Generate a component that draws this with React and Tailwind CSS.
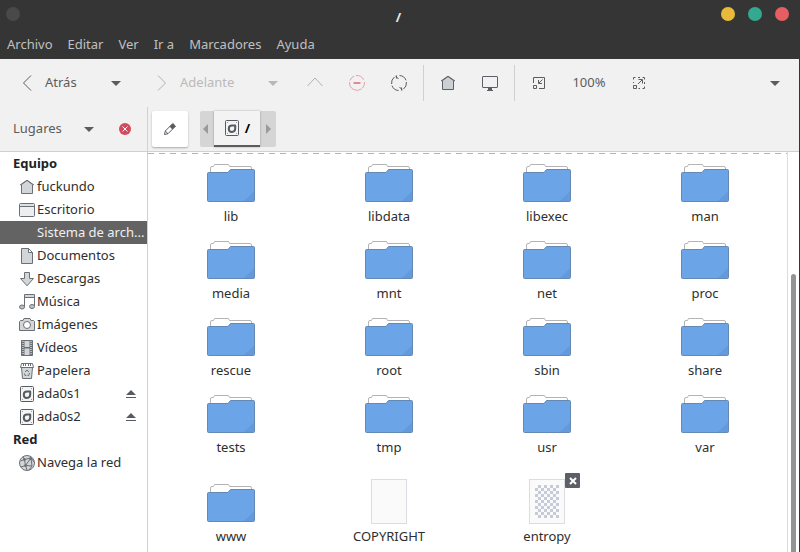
import React, { useState } from "react";

const DiskIcon = ({ className = "w-4 h-4" }) => (
  <svg viewBox="0 0 16 16" className={className} fill="none" stroke="#565b62">
    <rect x="1.500" y="0.500" width="13" height="15" rx="1" fill="#f4f4f5" />
    <path d="M3 2.500h1M12 2.500h1M3 13.500h1M12 13.500h1" stroke="#9a9ea3" />
    <path
      d="M8 5.500H11.200V8.800A3.200 3.200 0 1 1 8 5.500z"
      strokeWidth="2"
      strokeLinejoin="round"
    />
  </svg>
);

const placeIcons = {
  home: (
    <>
      <path d="M2.500 5.500v9h11v-9L8 1.500z" fill="#d3d6d8" />
      <path d="M1 6l7-4.800L15 6" />
    </>
  ),
  desktop: (
    <>
      <rect x="0.500" y="1.500" width="15" height="13" rx="1" fill="#eceeef" />
      <path d="M1 4.500h14" />
      <path d="M1.500 3h13" stroke="#cfd2d4" />
    </>
  ),
  document: (
    <>
      <path d="M2.500.5h7l4 4v11h-11z" fill="#d3d6d8" />
      <path d="M9.500.5v4h4z" fill="#fff" />
    </>
  ),
  download: <path d="M5.500 1.500h5v6h4L8 14.800 1.500 7.500h4z" fill="#d3d6d8" />,
  music: (
    <>
      <path d="M5.500 13V.5h10V12M5.500 3.500h10" />
      <path d="M6 1h9v2H6z" fill="#d3d6d8" stroke="none" />
      <ellipse cx="3" cy="13" rx="2.500" ry="2" fill="#bfc3c6" />
      <ellipse cx="13" cy="12.500" rx="2.500" ry="2" fill="#bfc3c6" />
    </>
  ),
  camera: (
    <>
      <path d="M1.500 3.500H4l1-2h6l1 2h2.500l1 1v9H.500v-9z" fill="#d3d6d8" />
      <circle cx="8" cy="8" r="3.500" fill="#fff" />
    </>
  ),
  video: (
    <>
      <path d="M2.500.5h11v15h-11z" fill="#6b7076" />
      <path d="M5.500 1h5v6h-5zM5.500 8.500h5v6.500h-5z" fill="#d3d6d8" stroke="none" />
      <path d="M4 1v14M12 1v14" stroke="#fff" strokeDasharray="1 1" />
    </>
  ),
  trash: (
    <>
      <path d="M2.500 4.500h11l-1 11h-9z" fill="#d3d6d8" />
      <path d="M1.500 4.500l1-4h11l1 4z" fill="#fff" />
      <path d="M4.500 1v2M6.500 1v2M9.500 1v2M11.500 1v2" />
      <path d="M6.200 9L8 7l1.800 2M10.500 10l-.8 2.500H8.500M7.300 12.500H6l-.6-2" />
    </>
  ),
  network: (
    <>
      <circle cx="8" cy="8" r="7.500" fill="#d3d6d8" />
      <path d="M1.500 6l4-1.500L12 3M5.500 4.500L4 1.800M5.500 4.500l1 6L2 12M6.500 10.500L12 3l1 8-6.500-.5M6.500 10.500L8 15M13 11l-3 4M12 3l3 4" />
      <circle cx="5.500" cy="4.500" r="1" fill="#6b7076" />
      <circle cx="11.500" cy="3.500" r="1" fill="#6b7076" />
      <circle cx="6.500" cy="10.500" r="1" fill="#6b7076" />
    </>
  ),
};

const PlaceIcon = ({ name }) => {
  if (name === "disk") return <DiskIcon className="w-4 h-4 shrink-0" />;
  return (
    <svg viewBox="0 0 16 16" className="w-4 h-4 shrink-0" fill="none" stroke="#6b7076">
      {placeIcons[name]}
    </svg>
  );
};

const FolderIcon = () => (
  <svg viewBox="0 0 48 39" className="w-[48px] h-[39px]">
    <path d="M3.500 12V5q0-1.500 1.500-1.500h1.500l1-2h14l1 2h20.500q1.500 0 1.500 1.500v6z" fill="#fff" stroke="#b4b4b4" />
    <path d="M.5 10.500q0-1 1-1H21l2.500-3h23q1 0 1 1V37.500q0 1-1 1h-45q-1 0-1-1z" fill="#6ba4e7" stroke="#6589b5" />
    <path d="M47 28.500v9q0 .5-.5.500H37z" fill="#6499dc" />
  </svg>
);

const FileIcon = () => (
  <svg viewBox="0 0 36 45" className="w-[36px] h-[45px]">
    <rect x="0.500" y="0.500" width="35" height="44" fill="#fafafa" stroke="#dcdce2" />
  </svg>
);

const BinaryIcon = () => (
  <svg viewBox="0 0 36 45" className="w-[36px] h-[45px]">
    <defs>
      <pattern id="checks" x="6" y="6" width="6" height="6" patternUnits="userSpaceOnUse">
        <path d="M3 0h3v3H3zM0 3h3v3H0z" fill="#c6cbdc" />
      </pattern>
    </defs>
    <rect x="0.500" y="0.500" width="35" height="44" fill="#fafafa" stroke="#dcdce2" />
    <rect x="6" y="6" width="24" height="33" fill="url(#checks)" />
  </svg>
);

const Caret = ({ className = "fill-[#5c5c5c]" }) => (
  <svg viewBox="0 0 10 5" className={`w-[10px] h-[5px] ${className}`}>
    <path d="M0 0h10L5 5z" />
  </svg>
);

const Eject = () => (
  <svg viewBox="0 0 10 8" className="w-[10px] h-[8px] fill-[#565b62]">
    <path d="M5 0l5 5H0zM0 7h10v1H0z" />
  </svg>
);

const menus = ["Archivo", "Editar", "Ver", "Ir a", "Marcadores", "Ayuda"];

const places = [
  {
    title: "Equipo",
    items: [
      { label: "fuckundo", icon: "home" },
      { label: "Escritorio", icon: "desktop" },
      { label: "Sistema de arch...", icon: "root" },
      { label: "Documentos", icon: "document" },
      { label: "Descargas", icon: "download" },
      { label: "Música", icon: "music" },
      { label: "Imágenes", icon: "camera" },
      { label: "Vídeos", icon: "video" },
      { label: "Papelera", icon: "trash" },
      { label: "ada0s1", icon: "disk", eject: true },
      { label: "ada0s2", icon: "disk", eject: true },
    ],
  },
  {
    title: "Red",
    items: [{ label: "Navega la red", icon: "network" }],
  },
];

const files = [
  "lib", "libdata", "libexec", "man",
  "media", "mnt", "net", "proc",
  "rescue", "root", "sbin", "share",
  "tests", "tmp", "usr", "var",
  "www",
].map((name) => ({ name, type: "folder" }));

files.push({ name: "COPYRIGHT", type: "file" });
files.push({ name: "entropy", type: "binary", locked: true });

const ToolButton = ({ label, className = "w-[42px]", children, ...rest }) => (
  <button
    aria-label={label}
    className={`h-[36px] flex items-center justify-center ${className}`}
    {...rest}
  >
    {children}
  </button>
);

const Separator = () => <div className="w-px h-[36px] mx-[3px] bg-[#d0d0d0]" />;

function TitleBar() {
  return (
    <header className="bg-[#353535] text-[#c0c0c0]">
      <div className="h-[28px] pl-[6px] pr-[11px] flex items-center justify-between">
        <button aria-label="Menú" className="w-[14px] h-[14px] rounded-full bg-[#494949]" />
        <h1 className="pl-[56px] pt-[6px] font-bold text-[#e8e8e8]">/</h1>
        <div className="flex gap-[13px]">
          <button aria-label="Minimizar" className="w-[14px] h-[14px] rounded-full bg-[#e9ba3a]" />
          <button aria-label="Maximizar" className="w-[14px] h-[14px] rounded-full bg-[#33a98f]" />
          <button aria-label="Cerrar" className="w-[14px] h-[14px] rounded-full bg-[#e55e64]" />
        </div>
      </div>
      <nav className="h-[31px] px-[7px] flex items-center gap-[15px]">
        {menus.map((m) => (
          <button key={m}>{m}</button>
        ))}
      </nav>
    </header>
  );
}

function Toolbar() {
  return (
    <div className="h-[48px] flex items-center text-[#5c5c5c]">
      <ToolButton className="w-[100px] pl-[22px] gap-[13px] justify-start!">
        <svg viewBox="0 0 10 16" className="w-[10px] h-[16px]" fill="none" stroke="#5c5c5c">
          <path d="M9 .5L1.500 8 9 15.500" />
        </svg>
        <span className="pb-[2px]">Atrás</span>
      </ToolButton>
      <ToolButton label="Historial atrás" className="w-[32px]">
        <Caret />
      </ToolButton>
      <ToolButton className="w-[125px] pl-[25px] gap-[13px] justify-start! text-[#bababa]" disabled>
        <svg viewBox="0 0 10 16" className="w-[10px] h-[16px]" fill="none" stroke="#b0b0b0">
          <path d="M1 .5L8.500 8 1 15.500" />
        </svg>
        <span className="pb-[2px]">Adelante</span>
      </ToolButton>
      <ToolButton label="Historial adelante" className="w-[32px] mr-[5px]" disabled>
        <Caret className="fill-[#b8b8b8]" />
      </ToolButton>
      <ToolButton label="Subir" disabled>
        <svg viewBox="0 0 16 16" className="w-4 h-4" fill="none" stroke="#b0b0b0">
          <path d="M.5 11L8 3l7.500 8" />
        </svg>
      </ToolButton>
      <ToolButton label="Detener" disabled>
        <svg viewBox="0 0 16 16" className="w-4 h-4" fill="none" stroke="#e3a0a8">
          <path d="M1 5.500a7.500 7.500 0 0 1 4-4.300M6.800.6a7.500 7.500 0 0 1 7.800 4.200M15.400 7a7.500 7.500 0 0 1-2 6.200M12.500 13.900A7.500 7.500 0 0 1 .6 7" />
          <path d="M4.500 8h7" stroke="#dd8c96" strokeWidth="2" />
        </svg>
      </ToolButton>
      <ToolButton label="Recargar">
        <svg viewBox="0 0 16 16" className="w-4 h-4" fill="none" stroke="#5c5c5c">
          <path d="M8.500.5A7.500 7.500 0 0 1 15 5.300M15.400 7A7.500 7.500 0 0 1 12.500 14M7.500 15.500A7.500 7.500 0 0 1 1 10.700M.6 9A7.500 7.500 0 0 1 3.500 2M4.500.8l3 3.200M5.500.5v3M11.500 15.200L8.500 12M10.500 15.500v-3" />
        </svg>
      </ToolButton>
      <Separator />
      <ToolButton label="Carpeta personal">
        <svg viewBox="0 0 16 16" className="w-4 h-4" stroke="#5c6066">
          <path d="M2.500 5.500v9h11v-9L8 1.500z" fill="#cdd0d2" />
          <path d="M1 6l7-4.800L15 6" fill="none" />
        </svg>
      </ToolButton>
      <ToolButton label="Equipo">
        <svg viewBox="0 0 16 16" className="w-4 h-4" fill="none" stroke="#5c6066">
          <rect x="0.500" y="1.500" width="15" height="11" rx="0.500" />
          <path d="M6 13h4v2h1v1H5v-1h1z" fill="#5c6066" stroke="none" />
        </svg>
      </ToolButton>
      <Separator />
      <ToolButton label="Reducir">
        <svg viewBox="0 0 12 12" className="w-[12px] h-[12px]" fill="none" stroke="#5c5c5c">
          <path d="M.5 6V.5h11v11H6M.5 8.500h3v3h-3z" />
          <path d="M9.500 2.500L6 6M5.500 3v3.500H9" />
        </svg>
      </ToolButton>
      <ToolButton className="w-[58px]">
        <span className="pb-[2px]">100%</span>
      </ToolButton>
      <ToolButton label="Ampliar">
        <svg viewBox="0 0 12 12" className="w-[12px] h-[12px]" fill="none" stroke="#5c5c5c">
          <path d="M.5 6V5M.5 2.500v-2h2M5 .5h2M9.500.5h2v2M11.500 5v2M11.500 9.500v2h-2M7 11.500H5.500M.5 8.500h3v3h-3z" />
          <path d="M5 7l4-4M5.500 2.500h4v4" />
        </svg>
      </ToolButton>
      <ToolButton label="Más opciones" className="w-[42px] ml-auto mr-[3px]">
        <Caret />
      </ToolButton>
    </div>
  );
}

function PathBar() {
  return (
    <div className="h-full flex items-center px-[4px]">
      <button
        aria-label="Editar ubicación"
        className="w-[36px] h-[36px] rounded-[2px] bg-white shadow-[0_1px_2px_rgba(0,0,0,0.3)] flex items-center justify-center"
      >
        <svg viewBox="0 0 14 14" className="w-[14px] h-[14px]" stroke="#565b62" fill="none">
          <path d="M1.500 12.500l.8-3.500L7 4.300l2.700 2.700L5 11.700z" fill="#fff" />
          <path d="M7 4.300L9.800 1.500l2.700 2.700L9.700 7z" fill="#565b62" />
          <path d="M2.300 9L5 11.700" />
        </svg>
      </button>
      <div className="ml-[12px] h-[36px] flex items-stretch rounded-[2px] bg-[#d5d5d5]">
        <button aria-label="Anterior" className="w-[14px] pr-[3px] flex items-center justify-center">
          <svg viewBox="0 0 5 10" className="w-[5px] h-[10px] fill-[#9a9a9a]">
            <path d="M5 0v10L0 5z" />
          </svg>
        </button>
        <button className="w-[46px] flex items-center justify-center gap-[5px] bg-[#f3f3f3] border-b-2 border-[#5c5c5c] font-bold text-black shadow-[0_0_2px_rgba(0,0,0,0.3)]">
          <DiskIcon />/
        </button>
        <button aria-label="Siguiente" className="w-[16px] flex items-center justify-center">
          <svg viewBox="0 0 5 10" className="w-[5px] h-[10px] fill-[#9a9a9a]">
            <path d="M0 0v10l5-5z" />
          </svg>
        </button>
      </div>
    </div>
  );
}

function Sidebar({ selected, onSelect }) {
  return (
    <aside className="w-[148px] shrink-0 border-r border-[#d0d0d0] leading-[23px] overflow-hidden">
      {places.map((group) => (
        <section key={group.title}>
          <h2 className="h-[23px] pl-[13px] font-bold text-[#222]">{group.title}</h2>
          <ul>
            {group.items.map((item) => (
              <li
                key={item.label}
                className={`h-[23px] pl-[19px] pr-[11px] flex items-center ${
                  selected === item.label ? "bg-[#636363] text-[#f0f0f0]" : ""
                }`}
              >
                <button
                  onClick={() => onSelect(item.label)}
                  className="flex-1 flex items-center gap-[2px] whitespace-nowrap"
                >
                  <PlaceIcon name={item.icon} />
                  {item.label}
                </button>
                {item.eject && (
                  <button aria-label={`Expulsar ${item.label}`}>
                    <Eject />
                  </button>
                )}
              </li>
            ))}
          </ul>
        </section>
      ))}
    </aside>
  );
}

function FileItem({ file }) {
  if (file.type === "folder") {
    return (
      <button className="flex flex-col items-center gap-[5px]">
        <FolderIcon />
        <span>{file.name}</span>
      </button>
    );
  }

  return (
    <button className="pt-[8px] flex flex-col items-center gap-[3px]">
      <span className="relative">
        {file.type === "binary" ? <BinaryIcon /> : <FileIcon />}
        {file.locked && (
          <span className="absolute -top-[6px] left-full w-[15px] h-[15px] rounded-[1px] bg-[#5c5f66] flex items-center justify-center">
            <svg viewBox="0 0 8 8" className="w-[8px] h-[8px]" stroke="#fff" strokeWidth="2">
              <path d="M1 1l6 6M7 1L1 7" />
            </svg>
          </span>
        )}
      </span>
      <span>{file.name}</span>
    </button>
  );
}

export default function App() {
  const [selected, setSelected] = useState("Sistema de arch...");

  return (
    <div className="h-screen flex flex-col bg-white text-[13px] leading-[18px] text-[#2e2e2e] font-['Noto_Sans',sans-serif] overflow-hidden">
      <TitleBar />

      <div className="flex-1 min-h-0 flex flex-col border-r border-[#353535]">
        <div className="bg-[#f1f1f1] border-b border-[#d0d0d0]">
          <Toolbar />
          <div className="h-[44px] flex">
            <div className="w-[148px] pl-[13px] flex items-center border-r border-[#d0d0d0] text-[#5c5c5c]">
              <div className="relative w-[82px] flex items-center">
                <select aria-label="Panel lateral" className="w-full pb-[2px] appearance-none bg-transparent">
                  <option>Lugares</option>
                </select>
                <span className="absolute right-[1px] pointer-events-none">
                  <Caret />
                </span>
              </div>
              <button aria-label="Cerrar panel" className="ml-[24px]">
                <svg viewBox="0 0 12 12" className="w-[12px] h-[12px]">
                  <circle cx="6" cy="6" r="6" fill="#d34a5c" />
                  <path d="M3.500 3.500l5 5M8.500 3.500l-5 5" stroke="#fff" />
                </svg>
              </button>
            </div>
            <PathBar />
          </div>
        </div>

        <div className="flex-1 min-h-0 flex">
          <Sidebar selected={selected} onSelect={setSelected} />

          <main className="flex-1 overflow-hidden">
            {/* more files above */}
            <svg className="block w-full h-[3px]">
              <line x1="0" y1="1.500" x2="100%" y2="1.500" stroke="#b4b4b4" strokeDasharray="6 5" />
            </svg>
            <div className="pt-[8px] pl-[4px] pr-[3px] pb-[7px] grid grid-cols-4 gap-y-[15px] items-end">
              {files.map((file) => (
                <FileItem key={file.name} file={file} />
              ))}
            </div>
          </main>

          {/* scrollbar */}
          <div className="w-[12px] shrink-0 pl-[3px] pt-[122px] border-l border-[#dcdcdc]">
            <div className="w-[5px] h-full rounded-t-[3px] bg-[#949494]" />
          </div>
        </div>
      </div>
    </div>
  );
}
